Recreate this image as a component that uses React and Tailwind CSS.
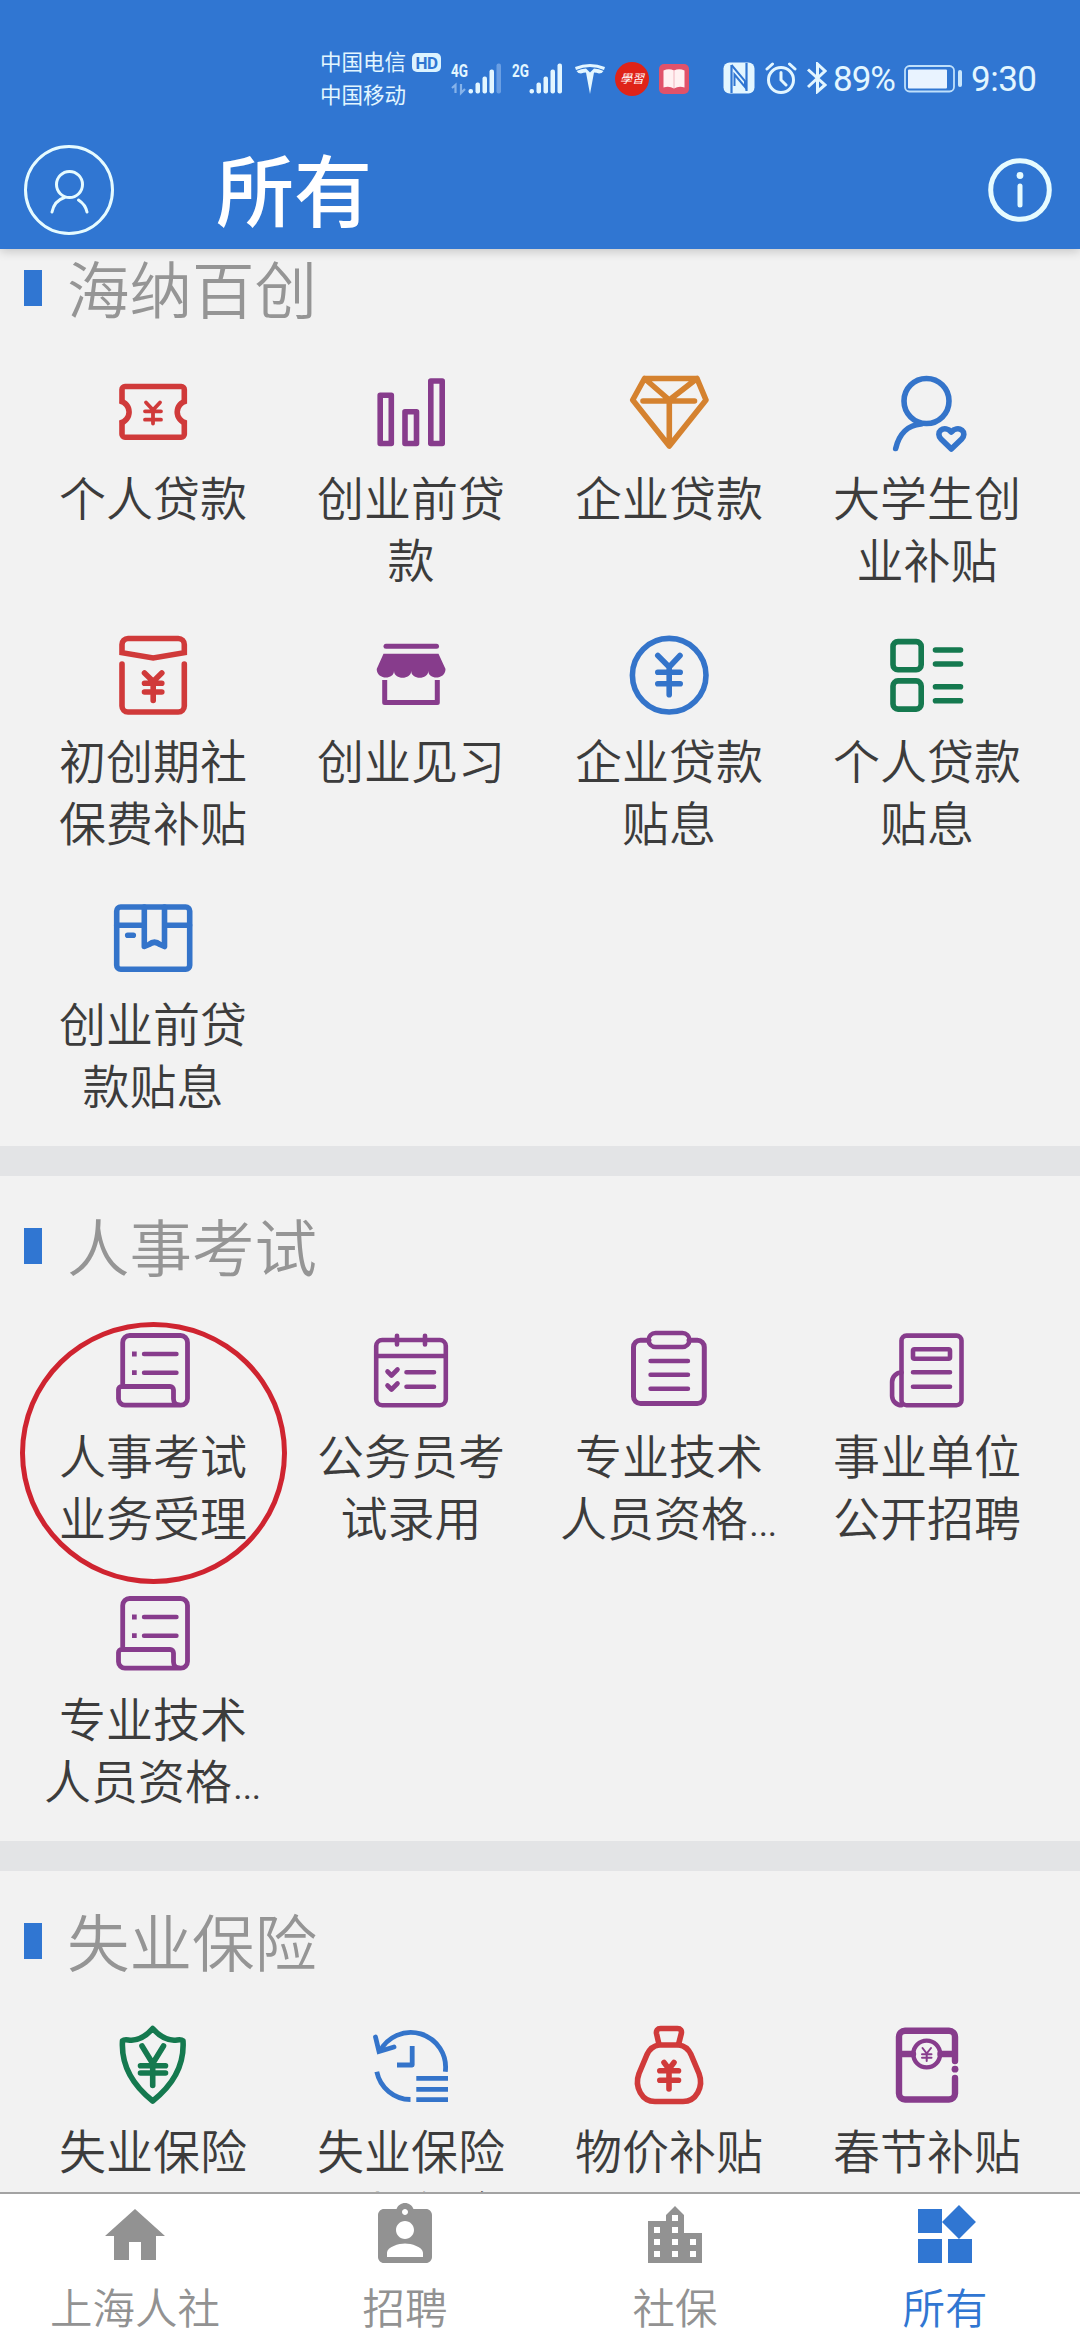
import { MdHome, MdAssignmentInd, MdLocationCity, MdWidgets } from "react-icons/md";

const RED = "#d03a3a";
const PURPLE = "#873c8c";
const ORANGE = "#d5822f";
const BLUE = "#3474ca";
const GREEN = "#15794f";

// Every service icon is drawn on the same 80x80 board.
function Icon({ color, width = 5.6, children }) {
  return (
    <svg
      viewBox="0 0 80 80"
      className="w-20 h-20 shrink-0"
      fill="none"
      stroke={color}
      strokeWidth={width}
      strokeLinecap="round"
      strokeLinejoin="round"
    >
      {children}
    </svg>
  );
}

const Ticket = () => (
  <Icon color={RED}>
    <path strokeLinecap="butt" d="M9 31.5V17.5a3 3 0 0 1 3-3H68.3a3 3 0 0 1 3 3V31.5M9 48.5V62.2a3 3 0 0 0 3 3H68.3a3 3 0 0 0 3-3V48.5" />
    <path strokeLinecap="butt" d="M7 29A11.2 11.2 0 0 1 7 51M73.3 29A11.2 11.2 0 0 0 73.3 51" />
    <path strokeWidth="3.8" d="M33 30.5L40 38L47 30.5M32 39.3H48M32 47.7H48M40 38V51.5" />
  </Icon>
);

const Bars = () => (
  <Icon color={PURPLE}>
    <path d="M9.2 23.2H20.3V71.5H9.2ZM34 39.7H45.5V71.5H34ZM59.8 9H71.2V71.5H59.8Z" />
  </Icon>
);

const Diamond = () => (
  <Icon color={ORANGE}>
    <path d="M15.5 6.5H68L77 28L40.3 74L3.7 28ZM15.5 6.5L40.3 28L68 6.5M14 29H65.5M40.3 28V73" />
  </Icon>
);

const Graduate = () => (
  <Icon color={BLUE}>
    <circle cx="39.5" cy="29" r="22.5" />
    <path d="M8.7 76.5C12 62 21 53 34 52" />
    <path d="M64.3 77L54 67C51.5 64.5 51 60.5 53.8 58.2C57 55.8 61.5 57 64.3 60C67.1 57 71.6 55.8 74.9 58.2C77.7 60.5 77.2 64.5 74.7 67Z" />
  </Icon>
);

const Envelope = () => (
  <Icon color={RED}>
    <path strokeLinejoin="miter" d="M9 17.7V9.5a6 6 0 0 1 6-6H65.3a6 6 0 0 1 6 6V17.7L40.2 23Z" />
    <path d="M9 29V71a6 6 0 0 0 6 6H65.3a6 6 0 0 0 6-6V29M31.5 38L40.2 46.5L48.8 38M31.5 48.3H48.8M31.5 57H48.8M40.2 46V65.5" />
  </Icon>
);

const Shop = () => (
  <Icon color={PURPLE} width={5}>
    <path d="M15 11.3H65.5" />
    <path
      fill={PURPLE}
      stroke="none"
      d="M12.5 18.7H67.5L74.5 34C74.5 45 57.3 45 57.3 36C57.3 45 40.2 45 40.2 36C40.2 45 23 45 23 36C23 45 5.7 45 5.7 34Z"
    />
    <path strokeLinecap="butt" d="M13.7 45V67.5H66.3V45" />
  </Icon>
);

const Coin = () => (
  <Icon color={BLUE}>
    <circle cx="40.2" cy="40.2" r="36.8" />
    <path d="M28.8 20.5L40.2 32L51 20.5M28.8 37.3H51.2M28.8 48.7H51.2M40.2 32V59.8" />
  </Icon>
);

const Listing = () => (
  <Icon color={GREEN}>
    <rect x="6" y="6.6" width="28.2" height="28.2" rx="5" />
    <rect x="6" y="45.9" width="28.2" height="28.2" rx="5" />
    <path d="M48.5 15H73.5M48.5 29H73.5M48.5 51.7H73.5M48.5 65.7H73.5" />
  </Icon>
);

const Parcel = () => (
  <Icon color={BLUE}>
    <rect x="3.7" y="9" width="73" height="62.3" rx="4" />
    <path d="M3.7 27.3H31.3M51.5 27.3H76.5M31.3 9V48.5L36 46.5Q41.5 42 47 46.5L51.5 48.5V9M14.7 37.3H20.3" />
  </Icon>
);

const Scroll = () => (
  <Icon color={PURPLE} width={4.8}>
    <path d="M9.7 56.5V12.5a7 7 0 0 1 7-7H67.5a7 7 0 0 1 7 7V68.5a6.7 6.7 0 0 1-6.7 6.7H12a6.5 6.5 0 0 1-6.5-6.5V59.5a3 3 0 0 1 3-3H57a3.5 3.5 0 0 1 3.5 3.5V69a6 6 0 0 0 6 6" />
    <path d="M31 24H63.5M31 42.7H63.5" strokeWidth="4.4" />
    <path d="M19 24H23.7M19 42.7H23.7" strokeLinecap="butt" />
  </Icon>
);

const Calendar = () => (
  <Icon color={PURPLE} width={4.6}>
    <rect x="5.2" y="10" width="69.6" height="65.2" rx="6" />
    <path d="M5.5 26H74.5M26 5.7V14.5M54 5.7V14.5M16.5 41.5L20.5 45.5L26.5 39.5M16.5 55.5L20.5 59.5L26.5 53.5M35.5 42.3H63M35.5 56.7H63" />
  </Icon>
);

const Clipboard = () => (
  <Icon color={PURPLE} width={5}>
    <path d="M20 10.3H11.5a7 7 0 0 0-7 7V66.5a7 7 0 0 0 7 7H68.3a7 7 0 0 0 7-7V17.3a7 7 0 0 0-7-7H60" />
    <rect x="19.5" y="3" width="41" height="14" rx="7" strokeWidth="4.4" />
    <path d="M21.5 31H59M21.5 44.7H59M21.5 58.7H59" strokeWidth="4.4" />
  </Icon>
);

const Newspaper = () => (
  <Icon color={PURPLE} width={4.6}>
    <rect x="14.5" y="5.6" width="60" height="69.6" rx="5" />
    <path d="M14.5 42.5A9.4 9.4 0 0 0 5.1 52V66A9.4 9.4 0 0 0 14.5 75.2" />
    <rect x="26" y="19.2" width="37" height="9.6" rx="1.5" />
    <path d="M26 42.3H63M26 56.7H63" />
  </Icon>
);

const Shield = () => (
  <Icon color={GREEN}>
    <path d="M39.7 3.5C45 9.5 51 15 61 15.2C64.5 15.3 67.5 13.5 70 15.8C71.5 40 60 60 39.7 76C19.5 60 8 40 9.5 15.8C12 13.5 15 15.3 18.5 15.2C28.5 15 34.5 9.5 39.7 3.5Z" />
    <path d="M29 21L39.7 38.5L50.5 21M27.5 40.7H52.5M27.5 48H52.5M39.7 38V60.5" />
  </Icon>
);

const History = () => (
  <Icon color={BLUE} width={4.8}>
    <path strokeLinecap="butt" d="M74.3 46.7A34.8 34.8 0 0 0 8.5 27M5.8 46.7A34.8 34.8 0 0 0 39.5 74.5M41.2 21V40H26M45.3 53.3H77M45.3 64.3H77M45.3 74.7H77" />
    <path strokeLinejoin="miter" d="M4.5 12L8 26.5L23 22" />
  </Icon>
);

const MoneyBag = () => (
  <Icon color={RED}>
    <path d="M30 19.5L27.5 8.5C27 5.5 28.5 3.5 31.5 3.5H48.5C51.5 3.5 53 5.5 52.3 8.5L49.5 19.5" />
    <path d="M30 20H50Q58 21 62 29.5L70 48.5C75 62 67 76.5 54 76.5H26C13 76.5 5 62 10 48.5L18 29.5Q22 21 30 20Z" />
    <path d="M35 37.5L40 44L45 37.5M30.8 45.7H49.5M30.8 55.3H49.5M40 44V64" />
  </Icon>
);

const RedPacket = () => (
  <Icon color={PURPLE} width={6.4}>
    <path d="M68 36V11.8a6 6 0 0 0-6-6H18a6 6 0 0 0-6 6V68.5a6 6 0 0 0 6 6H62a6 6 0 0 0 6-6V53M12 29H26M53.5 29H68" />
    <circle cx="39.7" cy="29" r="13.4" strokeWidth="4.4" />
    <path strokeWidth="2" d="M35.5 23L39.7 28.5L44 23M35 29.2H44.5M35 32.8H44.5M39.7 28.5V36" />
    <circle cx="68" cy="44.2" r="3.4" fill={PURPLE} stroke="none" />
  </Icon>
);

const SECTIONS = [
  {
    title: "海纳百创",
    items: [
      { lines: ["个人贷款"], icon: Ticket },
      { lines: ["创业前贷", "款"], icon: Bars },
      { lines: ["企业贷款"], icon: Diamond },
      { lines: ["大学生创", "业补贴"], icon: Graduate },
      { lines: ["初创期社", "保费补贴"], icon: Envelope },
      { lines: ["创业见习"], icon: Shop },
      { lines: ["企业贷款", "贴息"], icon: Coin },
      { lines: ["个人贷款", "贴息"], icon: Listing },
      { lines: ["创业前贷", "款贴息"], icon: Parcel },
    ],
  },
  {
    title: "人事考试",
    items: [
      { lines: ["人事考试", "业务受理"], icon: Scroll, circled: true },
      { lines: ["公务员考", "试录用"], icon: Calendar },
      { lines: ["专业技术", "人员资格…"], icon: Clipboard },
      { lines: ["事业单位", "公开招聘"], icon: Newspaper },
      { lines: ["专业技术", "人员资格…"], icon: Scroll },
    ],
  },
  {
    title: "失业保险",
    items: [
      { lines: ["失业保险"], icon: Shield },
      { lines: ["失业保险", "延长领金"], icon: History },
      { lines: ["物价补贴"], icon: MoneyBag },
      { lines: ["春节补贴"], icon: RedPacket },
    ],
  },
];

const TABS = [
  { label: "上海人社", icon: MdHome },
  { label: "招聘", icon: MdAssignmentInd },
  { label: "社保", icon: MdLocationCity },
  { label: "所有", icon: MdWidgets, active: true },
];

function Signal({ label, weak }) {
  return (
    <svg viewBox="0 0 52 34" className="w-[52px] h-[34px] shrink-0" fill="#e3f6ff">
      <text x="0" y="15" fontSize="17.5" fontWeight="700" fontFamily="Roboto, sans-serif" textLength="17" lengthAdjust="spacingAndGlyphs">
        {label}
      </text>
      {weak && <path d="M4.5 31V23L1 26M10 22V31L14 27" fill="none" stroke="#86b3ea" strokeWidth="2.2" />}
      <rect x="17.5" y="27" width="4.5" height="4.5" rx="2" />
      <rect x="24.5" y="20.5" width="4.5" height="11" rx="2" />
      <rect x="31.5" y="14.5" width="4.5" height="17" rx="2" />
      <rect x="38.5" y="7.5" width="4.5" height="24" rx="2" />
      <rect x="45.5" y="1.5" width="4.5" height="30" rx="2" fill={weak ? "#6b9fe3" : "#e3f6ff"} />
    </svg>
  );
}

function StatusBar() {
  return (
    <div className="h-[140px] pl-[320px] pt-[46px] flex items-start text-[#e3f6ff]">
      <div className="w-[88px] text-[21.5px] leading-[33px] whitespace-nowrap">
        <div>中国电信</div>
        <div>中国移动</div>
      </div>
      <div className="ml-1 mt-[7px] w-[29px] h-[19px] rounded-[5px] bg-[#dcf3ff] text-[#3076d2] text-[17px] leading-[20px] font-bold text-center tracking-[-0.5px]">
        HD
      </div>
      <div className="ml-[10px] mt-4 flex gap-[9px]">
        <Signal label="4G" weak />
        <Signal label="2G" />
      </div>
      <svg viewBox="0 0 30 30" className="ml-[11px] mt-[18px] w-[30px] h-[30px]" fill="#e3f6ff">
        <path d="M0 3Q15-3 30 3L29 6Q15 0 1 6ZM1.5 7Q6 4.5 11 4.5L15 8.5L19 4.5Q24 4.5 28.5 7Q27 9.5 24 9.5Q21.5 8.5 19 8.5L15 30L11 8.5Q8.5 8.5 6 9.5Q3 9.5 1.5 7Z" />
      </svg>
      <div className="ml-[10px] mt-4 w-[34px] h-[34px] rounded-full bg-[#df2318] text-white text-[12px] leading-[34px] text-center italic whitespace-nowrap">
        學習
      </div>
      <svg viewBox="0 0 30 30" className="ml-[10px] mt-[18px] w-[30px] h-[30px]">
        <rect width="30" height="30" rx="5" fill="#e0526a" />
        <path d="M4.5 6.5Q10 4 15 6.5Q20 4 25.5 6.5V23.5Q20 21.5 15 24.5Q10 21.5 4.5 23.5Z" fill="#fff1f2" />
        <path d="M15 6.5V24" stroke="#f0b4bf" />
      </svg>
      <svg viewBox="0 0 32 32" className="ml-[34px] mt-4 w-8 h-8">
        <rect x="0.5" y="0.5" width="31" height="31" rx="6" fill="#e3f6ff" />
        <path d="M8.5 31V3M23.5 1V29" fill="none" stroke="#3076d2" strokeWidth="2.2" />
        <path d="M8.5 3L22 19V25L11.5 12.5V24" fill="none" stroke="#3076d2" strokeWidth="2" />
      </svg>
      <svg viewBox="0 0 32 32" className="ml-[10px] mt-4 w-8 h-8" fill="none" stroke="#e3f6ff" strokeWidth="3" strokeLinecap="round">
        <circle cx="16" cy="18" r="12.5" />
        <path d="M16 10.5V18L21 23M2 7L7.5 2M30 7L24.5 2" />
      </svg>
      <svg viewBox="0 0 20 32" className="ml-[10px] mt-4 w-5 h-8" fill="none" stroke="#e3f6ff" strokeWidth="3">
        <path d="M1 7.5L18 23L10.5 29.5V2L18 9L1 25" />
      </svg>
      <div className="ml-[6px] mt-[14px] text-[35px] leading-[40px] w-[62px] tracking-[-1px]">89%</div>
      <svg viewBox="0 0 60 28" className="ml-[9px] mt-[19px] w-[60px] h-7">
        <rect x="1" y="1" width="49" height="25.5" rx="4.5" fill="none" stroke="#bfe0fb" strokeWidth="1.8" />
        <rect x="4" y="4.5" width="39" height="19" rx="1" fill="#e9f3ff" />
        <rect x="54" y="5" width="4" height="17" rx="2" fill="#c9e6fc" />
      </svg>
      <div className="ml-[7px] mt-[14px] text-[35px] leading-[40px] tracking-[-0.5px]">9:30</div>
    </div>
  );
}

function Header() {
  return (
    <header className="relative z-10 h-[249px] shrink-0 bg-[#3076d2] shadow-[0_2px_10px_rgba(0,0,0,0.2)]">
      <StatusBar />
      <div className="h-[100px] pl-6 pr-[28px] flex items-center">
        <svg viewBox="0 0 90 90" className="w-[90px] h-[90px]" fill="none" stroke="#e6fbff" strokeWidth="3" strokeLinecap="round">
          <circle cx="45" cy="45" r="43.5" />
          <circle cx="45.5" cy="39.5" r="13" />
          <path d="M28 67C29.5 60 34 54.5 40.5 52.5M54.5 55C59 58 62 62 63 67" />
        </svg>
        <h1 className="ml-[102px] pt-[10px] grow text-[78px] leading-[90px] font-medium text-white">所有</h1>
        <svg viewBox="0 0 64 64" className="w-16 h-16" fill="none" stroke="#e6fbff" strokeWidth="5" strokeLinecap="round">
          <circle cx="32" cy="32" r="29.3" />
          <path d="M32 28V47" />
          <circle cx="32" cy="17.5" r="3.4" fill="#e6fbff" stroke="none" />
        </svg>
      </div>
    </header>
  );
}

function Service({ item }) {
  return (
    <div className="relative h-[263px] pt-[15px] flex flex-col items-center">
      <item.icon />
      <div className="mt-[17px] text-[47px] leading-[62px] font-[350] text-center whitespace-nowrap text-[#3c3c3c]">
        {item.lines.map((line) => (
          <div key={line}>{line}</div>
        ))}
      </div>
      {item.circled && (
        <div className="absolute left-[-4px] top-[7px] w-[267px] h-[262px] rounded-[50%] border-5 border-[#cf2430]" />
      )}
    </div>
  );
}

function Section({ section }) {
  return (
    <section className="shrink-0 bg-[#f2f2f2]">
      <div className="h-[139px] pt-px pl-6 flex items-center">
        <span className="w-[18px] h-9 bg-[#3076d2]" />
        <h2 className="ml-[25px] pt-[9px] text-[62.5px] leading-[80px] font-[350] text-[#959595]">{section.title}</h2>
      </div>
      <div className="px-6 grid grid-cols-4">
        {section.items.map((item, i) => (
          <Service key={i} item={item} />
        ))}
      </div>
    </section>
  );
}

export default function App() {
  return (
    <div
      lang="zh-CN"
      className="w-[1080px] h-[2340px] overflow-hidden flex flex-col bg-[#f2f2f2] font-[Roboto,'Noto_Sans_CJK_SC',sans-serif]"
    >
      <Header />
      {/* the list is scrolled a little way under the header */}
      <main className="-mt-[31px] grow min-h-0 overflow-hidden flex flex-col gap-[30px] bg-[#e3e4e6]">
        {SECTIONS.map((s) => (
          <Section key={s.title} section={s} />
        ))}
      </main>
      <nav className="h-[148px] shrink-0 border-t-2 border-[#a3a3a3] bg-white grid grid-cols-4">
        {TABS.map((t) => (
          <div
            key={t.label}
            className={`pt-[6px] flex flex-col items-center ${t.active ? "text-[#3076d2]" : "text-[#929292]"}`}
          >
            <t.icon className="w-[72px] h-[72px]" />
            <span className="mt-[9px] text-[42.5px] leading-[58px] font-[350]">{t.label}</span>
          </div>
        ))}
      </nav>
    </div>
  );
}
